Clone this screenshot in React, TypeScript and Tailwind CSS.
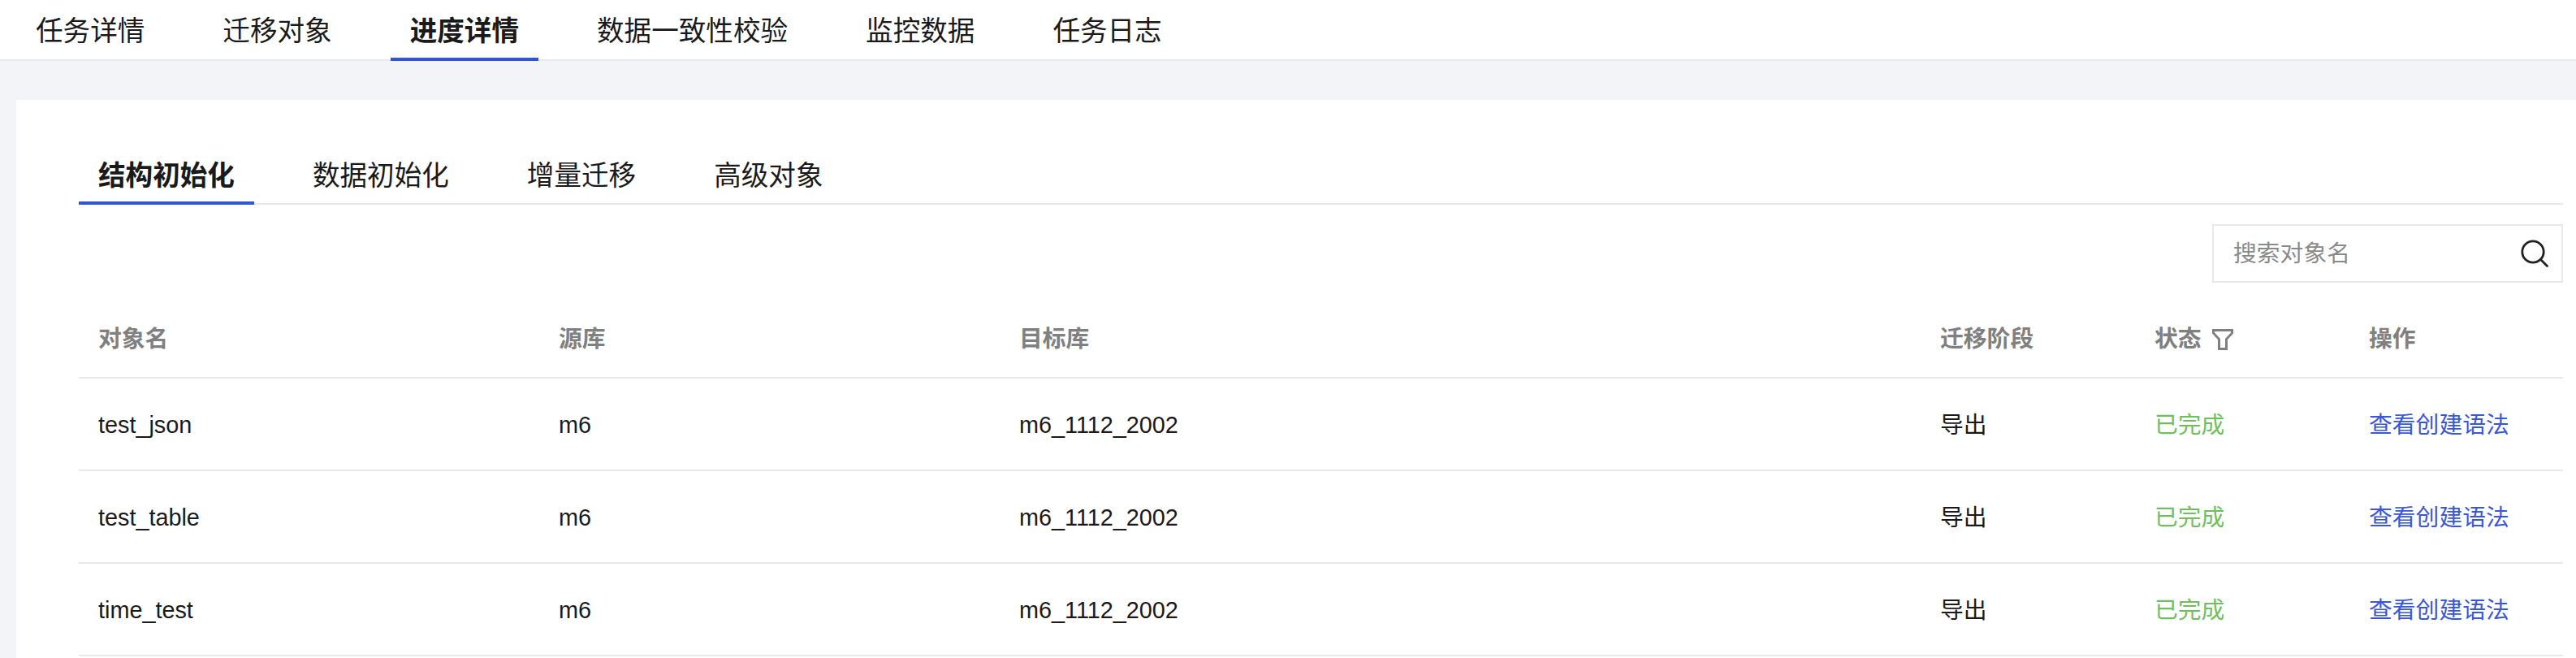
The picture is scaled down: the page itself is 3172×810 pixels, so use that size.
const FONT = "font-['Liberation_Sans','Noto_Sans_CJK_SC',sans-serif]";

const topTabs = ["任务详情", "迁移对象", "进度详情", "数据一致性校验", "监控数据", "任务日志"];
const subTabs = ["结构初始化", "数据初始化", "增量迁移", "高级对象"];
const rows = ["test_json", "test_table", "time_test"];
const columns = "grid grid-cols-[567px_567px_1134px_264px_264px_263px]";

function SearchIcon() {
  return (
    <svg width="34" height="34" viewBox="0 0 34 34" fill="none" stroke="#222222" strokeWidth="2.8" strokeLinecap="round">
      <circle cx="15" cy="15" r="13.2" />
      <path d="M24.5 24.5 L32.5 32.5" />
    </svg>
  );
}

function FunnelIcon() {
  return (
    <svg width="26" height="26" viewBox="0 0 26 26" fill="none" stroke="#808080" strokeWidth="3">
      <path d="M1.5 1.5 H24.5 V5 L17.5 12.5 V24.5 H8.5 V12.5 L1.5 5 Z" />
    </svg>
  );
}

export default function App() {
  return (
    <div className={`${FONT} h-[810px] w-[3172px] overflow-hidden bg-[#f3f4f8] text-[#1a1a1a]`}>
      <nav className="flex h-[75px] items-start gap-[48px] border-b-2 border-[#e8e8ee] bg-white pl-[20px]">
        {topTabs.map((t) => (
          <div
            key={t}
            className={`h-[75px] px-[24px] pt-[17px] text-[33.6px] leading-[44px] ${
              t === "进度详情" ? "border-b-4 border-[#2f54d9] font-bold" : ""
            }`}
          >
            {t}
          </div>
        ))}
      </nav>

      <main className="mt-[48px] ml-[20px] h-[700px] bg-white pt-[56px] pr-[16px] pl-[77px]">
        <div className="flex h-[73px] items-start gap-[48px] border-b-2 border-[#e8e8ee]">
          {subTabs.map((t, i) => (
            <div
              key={t}
              className={`h-[73px] px-[24px] pt-[16px] text-[33.6px] leading-[44px] ${
                i === 0 ? "border-b-4 border-[#2f54d9] font-bold" : ""
              }`}
            >
              {t}
            </div>
          ))}
        </div>

        <div className="mt-[24px] flex justify-end">
          <div className="flex h-[72px] w-[432px] items-center justify-between border-2 border-[#e8e8ee] pr-[16px] pl-[24px]">
            <span className="pt-[1px] text-[28.8px] text-[#8a8a8a]">搜索对象名</span>
            <SearchIcon />
          </div>
        </div>

        <div className={`${columns} mt-[20px] h-[98px] items-center border-b-2 border-[#e8e8ee] pt-[3px] text-[28.8px] font-bold text-[#808080]`}>
          <div className="px-[24px]">对象名</div>
          <div className="px-[24px]">源库</div>
          <div className="px-[24px]">目标库</div>
          <div className="px-[24px]">迁移阶段</div>
          <div className="flex items-center gap-[13px] px-[24px]">
            状态
            <FunnelIcon />
          </div>
          <div className="px-[24px]">操作</div>
        </div>

        {rows.map((name) => (
          <div key={name} className={`${columns} h-[114px] items-center border-b-2 border-[#e8e8ee] pt-[3px] text-[28.8px]`}>
            <div className="px-[24px]">{name}</div>
            <div className="px-[24px]">m6</div>
            <div className="px-[24px]">m6_1112_2002</div>
            <div className="px-[24px]">导出</div>
            <div className="px-[24px] text-[#6fbf5e]">已完成</div>
            <div className="px-[24px] text-[#3a57d8]">查看创建语法</div>
          </div>
        ))}
      </main>
    </div>
  );
}
